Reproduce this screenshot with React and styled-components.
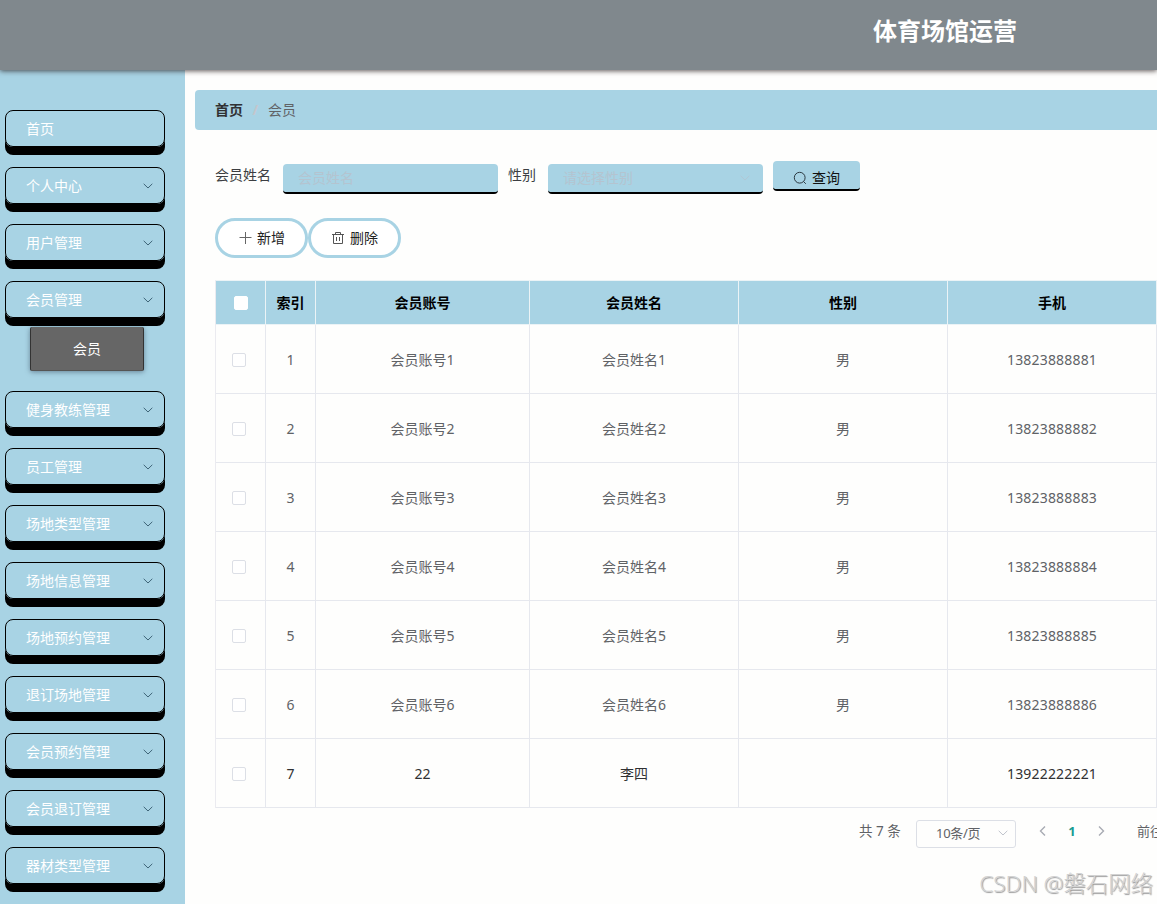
import React from "react";
import styled, { createGlobalStyle, css } from "styled-components";

const sky = "#a8d3e4";

const GlobalStyle = createGlobalStyle`
  *, *::before, *::after { box-sizing: border-box; }
  html, body { margin: 0; height: 100%; overflow: hidden; }
  body {
    background: #fefefd;
    color: #303133;
    font: 14px/20px "Noto Sans", "Noto Sans CJK SC", sans-serif;
  }
  button, input { font: inherit; }
`;

const Page = styled.div`
  position: relative;
  display: flex;
  flex-direction: column;
  width: 1157px;
  height: 904px;
  overflow: hidden;
`;

const Header = styled.header`
  position: relative;
  z-index: 2;
  flex: none;
  height: 70px;
  padding: 13px 0 0 873px;
  background: #80888d;
  box-shadow: 0 1px 5px rgba(40, 30, 30, 0.75);
`;

const Title = styled.h1`
  margin: 0;
  color: #fff;
  font-size: 24px;
  line-height: 36px;
  font-weight: 700;
  white-space: nowrap;
`;

const Body = styled.div`
  display: flex;
  flex: 1;
  min-height: 0;
`;

const Sidebar = styled.nav`
  flex: none;
  width: 185px;
  padding: 40px 20px 0 5px;
  background: ${sky};
  overflow: hidden;
`;

const MenuItem = styled.div`
  position: relative;
  z-index: 1;
  display: flex;
  align-items: center;
  justify-content: space-between;
  height: 37px;
  margin-bottom: 20px;
  padding: 0 10px 0 20px;
  border: 1px solid #000;
  border-radius: 8px;
  box-shadow: 0 8px 0 #000;
  color: #fff;
  ${(p) => p.$open && css`margin-bottom: 9px;`}
`;

const SubMenu = styled.div`
  width: 114px;
  height: 44px;
  margin: 0 0 20px 25px;
  border: 1px solid #333;
  border-top: 0;
  border-bottom-color: #555;
  border-radius: 2px;
  background: #666;
  box-shadow: 0 1px 5px rgba(60, 80, 100, 0.6);
  color: #fff;
  line-height: 43px;
  text-align: center;
`;

const Main = styled.main`
  flex: none;
  width: 1100px;
  padding: 20px 0 0 10px;
`;

const Breadcrumb = styled.div`
  display: flex;
  align-items: center;
  height: 40px;
  padding-left: 20px;
  border-radius: 4px;
  background: ${sky};
`;

const CrumbHome = styled.span`
  font-weight: 700;
`;

const CrumbSlash = styled.span`
  width: 25px;
  text-align: center;
  color: #c4c6cc;
  font-weight: 700;
`;

const CrumbCurrent = styled.span`
  color: #606266;
`;

const Content = styled.section`
  padding: 31px 0 0 20px;
`;

const Filters = styled.div`
  display: flex;
  align-items: flex-start;
`;

const Label = styled.label`
  margin: 4px ${(p) => p.$gap}px 0 0;
  color: #3c3e42;
`;

const Field = styled.div`
  display: flex;
  align-items: center;
  justify-content: space-between;
  width: 215px;
  height: 30px;
  margin: 3px 10px 0 0;
  padding: 0 12px 0 ${(p) => p.$inset}px;
  border-bottom: 2px solid #000;
  border-radius: 4px;
  background: ${sky};
  color: #b4c4d0;
`;

const SearchButton = styled.button`
  display: flex;
  align-items: center;
  justify-content: center;
  gap: 5px;
  width: 87px;
  height: 30px;
  padding: 6px 0 0;
  border: 0;
  border-bottom: 2px solid #000;
  border-radius: 4px;
  background: ${sky};
  color: #111;
`;

const Actions = styled.div`
  display: flex;
  margin-top: 24px;
`;

const PillButton = styled.button`
  display: flex;
  align-items: center;
  justify-content: center;
  gap: 5px;
  width: 93px;
  height: 40px;
  padding: 0;
  border: 3px solid ${sky};
  border-radius: 20px;
  background: #fff;
  color: #222;
`;

const Table = styled.table`
  width: 942px;
  margin-top: 22px;
  border-collapse: separate;
  border-spacing: 0;
  border-left: 1px solid #ebebf0;
  border-top: 1px solid #ebf3f6;
  table-layout: fixed;
  text-align: center;
`;

const HeadCell = styled.th`
  height: 44px;
  padding: 0;
  border-right: 1px solid #ebf3f6;
  border-bottom: 1px solid #ebf3f6;
  background: ${sky};
  color: #000;
  font-weight: 700;
`;

const Cell = styled.td`
  height: 69px;
  padding: 2px 0 0;
  border-right: 1px solid #e6e8ee;
  border-bottom: 1px solid #e6e8ee;
  color: ${(p) => (p.$dark ? "#303133" : "#606266")};
`;

const Phone = styled.span`
  letter-spacing: 0.18px;
`;

const Checkbox = styled.span`
  display: block;
  width: 14px;
  height: 14px;
  margin: 0 auto 0 ${(p) => (p.$head ? 18 : 16)}px;
  border: 1px solid ${(p) => (p.$head ? "#fff" : "#dcdfe6")};
  border-radius: 2px;
  background: #fff;
`;

const Pagination = styled.div`
  display: flex;
  align-items: flex-start;
  margin: 11px 0 0 644px;
  color: #606266;
  font-size: 13px;
  line-height: 24px;
  white-space: nowrap;
`;

const Total = styled.span`
  width: 57px;
  font-size: 13.5px;
`;

const PageSize = styled.div`
  display: flex;
  align-items: center;
  justify-content: space-between;
  width: 100px;
  height: 28px;
  margin-top: 1px;
  padding: 0 6px 2px 19px;
  border: 1px solid #dcdfe6;
  border-radius: 3px;
  letter-spacing: -0.3px;
`;

const Pager = styled.div`
  display: flex;
  align-items: center;
  justify-content: space-between;
  width: 70px;
  height: 24px;
  margin: 0 30px 0 21px;
`;

const Current = styled.span`
  color: #1a9c92;
  font-weight: 700;
`;

const Watermark = styled.div`
  position: absolute;
  z-index: 3;
  right: 4px;
  bottom: 4px;
  color: #d2d2d2;
  font-size: 22.4px;
  font-weight: 300;
  line-height: 32px;
  text-shadow: 1px 1px 1px #999;
  white-space: nowrap;
`;

const Icon = styled.svg.attrs({ fill: "none", stroke: "currentColor" })`
  flex: none;
  display: block;
  color: ${(p) => p.$color || "inherit"};
`;

const ChevronDown = ({ color }) => (
  <Icon width="12" height="12" viewBox="0 0 12 12" $color={color}>
    <path d="M1.7 3.8 6 8l4.3-4.2" />
  </Icon>
);

const Chevron = ({ right }) => (
  <Icon width="12" height="12" viewBox="0 0 12 12" $color="#a8abb3" strokeWidth="1.4">
    <path d={right ? "M4 1.5 8.5 6 4 10.5" : "M8 1.5 3.5 6 8 10.5"} />
  </Icon>
);

const SearchIcon = () => (
  <Icon width="14" height="14" viewBox="0 0 14 14" $color="#2c3a42">
    <circle cx="6.7" cy="6.7" r="5.4" />
    <path d="m10.5 10.5 2.3 2.3" />
  </Icon>
);

const PlusIcon = () => (
  <Icon width="14" height="14" viewBox="0 0 14 14" $color="#666">
    <path d="M7.5 1v12M1.5 6.5h12" />
  </Icon>
);

const TrashIcon = () => (
  <Icon width="14" height="14" viewBox="0 0 14 14" $color="#555">
    <path d="M1 3.5h12M4.5 3.5v-2h5v2M2.5 3.5v9h9v-9M5.5 6v4M8.5 6v4" />
  </Icon>
);

const menu = [
  "首页",
  "个人中心",
  "用户管理",
  "会员管理",
  "健身教练管理",
  "员工管理",
  "场地类型管理",
  "场地信息管理",
  "场地预约管理",
  "退订场地管理",
  "会员预约管理",
  "会员退订管理",
  "器材类型管理",
];

const members = [
  ...[1, 2, 3, 4, 5, 6].map((n) => ({
    id: n,
    account: `会员账号${n}`,
    name: `会员姓名${n}`,
    gender: "男",
    phone: `1382388888${n}`,
  })),
  { id: 7, account: "22", name: "李四", gender: "", phone: "13922222221" },
];

const columns = ["索引", "会员账号", "会员姓名", "性别", "手机"];
const widths = [50, 50, 214, 209, 209, 209];

export default function App() {
  return (
    <>
      <GlobalStyle />
      <Page>
        <Header>
          <Title>体育场馆运营</Title>
        </Header>
        <Body>
          <Sidebar>
            {menu.map((label, i) => (
              <React.Fragment key={label}>
                <MenuItem $open={label === "会员管理"}>
                  {label}
                  {i > 0 && <ChevronDown color="#3f6578" />}
                </MenuItem>
                {label === "会员管理" && <SubMenu>会员</SubMenu>}
              </React.Fragment>
            ))}
          </Sidebar>
          <Main>
            <Breadcrumb>
              <CrumbHome>首页</CrumbHome>
              <CrumbSlash>/</CrumbSlash>
              <CrumbCurrent>会员</CrumbCurrent>
            </Breadcrumb>
            <Content>
              <Filters>
                <Label $gap={12}>会员姓名</Label>
                <Field $inset={15}>会员姓名</Field>
                <Label $gap={12}>性别</Label>
                <Field $inset={15}>
                  请选择性别
                  <ChevronDown color="#b0c8d6" />
                </Field>
                <SearchButton>
                  <SearchIcon />
                  查询
                </SearchButton>
              </Filters>
              <Actions>
                <PillButton>
                  <PlusIcon />
                  新增
                </PillButton>
                <PillButton>
                  <TrashIcon />
                  删除
                </PillButton>
              </Actions>
              <Table>
                <colgroup>
                  {widths.map((w, i) => (
                    <col key={i} style={{ width: w }} />
                  ))}
                </colgroup>
                <thead>
                  <tr>
                    <HeadCell>
                      <Checkbox $head />
                    </HeadCell>
                    {columns.map((c) => (
                      <HeadCell key={c}>{c}</HeadCell>
                    ))}
                  </tr>
                </thead>
                <tbody>
                  {members.map((m) => (
                    <tr key={m.id}>
                      <Cell>
                        <Checkbox />
                      </Cell>
                      <Cell $dark={m.id === 7}>{m.id}</Cell>
                      <Cell $dark={m.id === 7}>{m.account}</Cell>
                      <Cell $dark={m.id === 7}>{m.name}</Cell>
                      <Cell>{m.gender}</Cell>
                      <Cell $dark={m.id === 7}>
                        <Phone>{m.phone}</Phone>
                      </Cell>
                    </tr>
                  ))}
                </tbody>
              </Table>
              <Pagination>
                <Total>共 7 条</Total>
                <PageSize>
                  10条/页
                  <ChevronDown color="#c0c4cc" />
                </PageSize>
                <Pager>
                  <Chevron />
                  <Current>1</Current>
                  <Chevron right />
                </Pager>
                <span>前往</span>
              </Pagination>
            </Content>
          </Main>
        </Body>
        <Watermark>CSDN @磐石网络</Watermark>
      </Page>
    </>
  );
}
